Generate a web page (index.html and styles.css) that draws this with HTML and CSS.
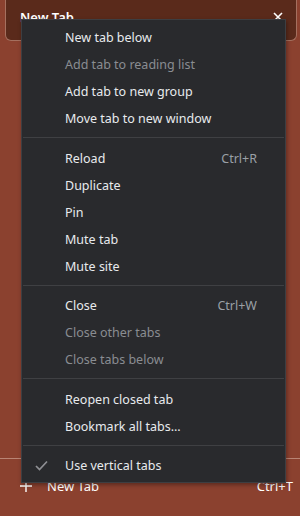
FILE: index.html
```html
<!DOCTYPE html>
<html lang="en">
<head>
    <meta charset="UTF-8">
    <title>Tab menu</title>
    <link rel="stylesheet" href="styles.css">
</head>
<body>

    <!-- Active tab at the top of the vertical strip -->
    <div class="tab">
        <span class="tab-title">New Tab</span>
        <svg class="tab-close" width="10" height="10" viewBox="0 0 10 10">
            <path d="M1 1L9 9M9 1L1 9" stroke="#fff" stroke-width="1.6"/>
        </svg>
    </div>

    <div class="spacer"></div>

    <!-- New tab row at the bottom -->
    <div class="new-tab">
        <svg class="plus" width="12" height="12" viewBox="0 0 12 12">
            <path d="M6 0V12M0 6H12" stroke="#fff" stroke-width="1.4"/>
        </svg>
        <span class="new-tab-label">New Tab</span>
        <span class="new-tab-key">Ctrl+T</span>
    </div>

    <!-- Context menu -->
    <div class="menu">
        <div class="item">New tab below</div>
        <div class="item disabled">Add tab to reading list</div>
        <div class="item">Add tab to new group</div>
        <div class="item">Move tab to new window</div>
        <div class="sep"></div>
        <div class="item">Reload <span class="key">Ctrl+R</span></div>
        <div class="item">Duplicate</div>
        <div class="item">Pin</div>
        <div class="item">Mute tab</div>
        <div class="item">Mute site</div>
        <div class="sep"></div>
        <div class="item">Close <span class="key">Ctrl+W</span></div>
        <div class="item disabled">Close other tabs</div>
        <div class="item disabled">Close tabs below</div>
        <div class="sep"></div>
        <div class="item">Reopen closed tab</div>
        <div class="item">Bookmark all tabs...</div>
        <div class="sep"></div>
        <div class="item checked">
            <svg class="check" width="13" height="11" viewBox="0 0 13 11">
                <path d="M1 6L4.5 9.5L12 1.5" fill="none" stroke="#8f9094" stroke-width="1.7"/>
            </svg>
            Use vertical tabs
        </div>
    </div>

</body>
</html>
```

FILE: styles.css
```css
html, body {
    height: 100%;
}

body {
    margin: 0;
    background-color: #8b412f;
    font-family: 'Noto Sans', sans-serif;
    font-size: 12.5px;
    color: #e8eaed;
    display: flex;
    flex-direction: column;
    overflow: hidden;
}

.tab {
    margin: 0 3px 0 5px;
    height: 41px;
    background-color: #5a2a1b;
    border: 1px solid #a5705f;
    border-top: none;
    border-radius: 0 0 6px 6px;
    display: flex;
    align-items: center;
    padding: 0 13px 6px 14px;
    box-sizing: border-box;
}

.tab-title {
    flex: 1;
    color: #fff;
    font-weight: 600;
    font-size: 13px;
}

.spacer {
    flex: 1;
}

.new-tab {
    height: 58px;
    border-top: 1px solid #b98474;
    display: flex;
    align-items: center;
    padding: 0 7px 3px 20px;
    box-sizing: border-box;
    color: #fff;
    font-size: 13px;
}

.plus {
    margin-right: 15px;
}

.new-tab-label {
    flex: 1;
}

.menu {
    position: absolute;
    left: 21px;
    top: 19px;
    width: 265px;
    box-sizing: border-box;
    padding: 4px 0 3px;
    background-color: #292a2d;
    border: 1px solid #3d3e42;
    box-shadow: 1px 2px 4px rgba(0, 0, 0, 0.35);
}

.item {
    height: 27px;
    display: flex;
    align-items: center;
    padding: 0 28px 0 43px;
    position: relative;
}

.item.disabled {
    color: #8a8d92;
}

.key {
    margin-left: auto;
    color: #9aa0a6;
}

.check {
    position: absolute;
    left: 13px;
    top: 8px;
}

.sep {
    height: 1px;
    margin: 5px 1px 6.5px;
    background-color: #3f4043;
}
```
